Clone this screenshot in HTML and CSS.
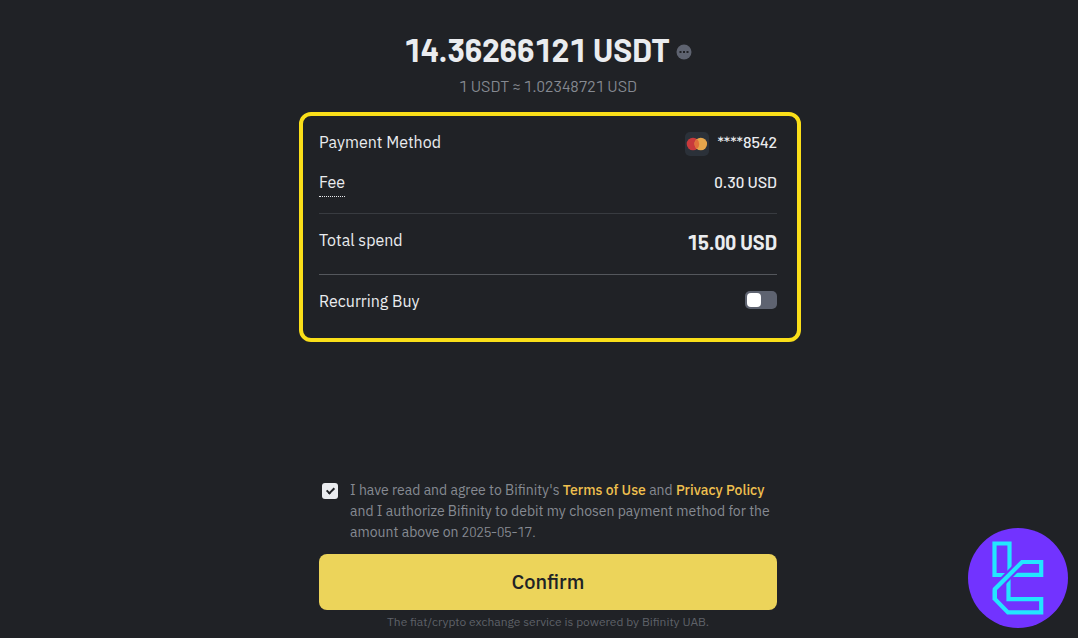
FILE: index.html
```html
<!DOCTYPE html>
<html lang="en">
<head>
  <meta charset="UTF-8">
  <meta name="viewport" content="width=device-width, initial-scale=1.0">
  <title>Confirm Order</title>
  <link rel="stylesheet" href="styles.css">
</head>
<body>
  <main class="order">
    <header class="amount">
      <h1>
        14.36266121 USDT
        <button class="more" type="button" aria-label="More">
          <svg viewBox="0 0 16 16" width="16" height="16">
            <circle cx="8" cy="8" r="7.5" fill="#5e6370"/>
            <path d="M3.5 7h2v2h-2zM7 7h2v2H7zM10.5 7h2v2h-2z" fill="#202226"/>
          </svg>
        </button>
      </h1>
      <p class="rate">1 USDT ≈ 1.02348721 USD</p>
    </header>

    <section class="details">
      <div class="row">
        <span>Payment Method</span>
        <span class="card-number">
          <svg viewBox="0 0 24 24" width="24" height="24" aria-hidden="true">
            <rect width="24" height="24" rx="5" fill="#2b3139"/>
            <circle cx="8" cy="12" r="6.3" fill="#c83a3c"/>
            <circle cx="15.8" cy="12" r="6.3" fill="#e5a54b"/>
            <path d="M11.9 7.1a6.3 6.3 0 0 1 0 9.8 6.3 6.3 0 0 1 0-9.8z" fill="#e0703a"/>
          </svg>
          <span class="number">****8542</span>
        </span>
      </div>
      <div class="row fee">
        <span class="hint">Fee</span>
        <span class="number">0.30 USD</span>
      </div>
      <div class="row total">
        <span>Total spend</span>
        <strong class="number">15.00 USD</strong>
      </div>
      <div class="row recurring">
        <label for="recurring">Recurring Buy</label>
        <input id="recurring" class="switch" type="checkbox" role="switch">
      </div>
    </section>

    <div class="agreement">
      <input id="agree" class="tick" type="checkbox" checked>
      <label for="agree">I have read and agree to Bifinity's <a href="#">Terms of Use</a> and <a href="#">Privacy Policy</a> and I authorize Bifinity to debit my chosen payment method for the amount above on <time>2025-05-17.</time></label>
    </div>
    <button class="confirm" type="button">Confirm</button>
    <p class="powered">The fiat/crypto exchange service is powered by Bifinity UAB.</p>
  </main>

  <svg class="logo" viewBox="0 0 100 100" width="100" height="100" aria-hidden="true">
    <circle cx="50" cy="50" r="50" fill="#7233ff"/>
    <g fill="none" stroke="#22e6ff" stroke-width="4.2">
      <path d="M26.5 15.5h15V47h-15z"/>
      <path d="M40 46.8h33.2V34H54"/>
      <path d="M40.5 48v23.2h32.7v13.2H40L26.8 71V61.5"/>
      <path d="M30 58L52 36" stroke="#7233ff" stroke-width="8.4"/>
      <path d="M26.8 72V61.2L54 34h4"/>
    </g>
  </svg>
</body>
</html>
```

FILE: styles.css
```css
* {
  box-sizing: border-box;
}

body {
  margin: 0;
  padding: 0 0 0 18px;
  background: #202226;
  color: #eaecef;
  font-family: "IBM Plex Sans", "Noto Sans", sans-serif;
  font-size: 16px;
  line-height: 24px;
}

.order {
  max-width: 458px;
  margin: 0 auto;
  padding-top: 28px;
}

.amount {
  text-align: center;
}

.amount h1,
.rate,
.number,
.agreement time {
  font-family: Barlow, Roboto, sans-serif;
  font-variant-numeric: tabular-nums;
}

.amount h1 {
  display: flex;
  align-items: center;
  justify-content: center;
  gap: 6px;
  margin: 0;
  font-size: 32px;
  font-weight: 700;
  line-height: 42px;
}

.more {
  display: flex;
  padding: 6px 0 0;
  border: 0;
  background: none;
  cursor: pointer;
}

.rate {
  margin: 4px 0 0;
  color: #868a92;
  font-size: 16px;
}

.details {
  margin: 14px -24px 0 -20px;
  padding: 14px 20px 25px 16px;
  border: 4px solid #fadf19;
  border-radius: 12px;
}

.row {
  display: flex;
  align-items: baseline;
  justify-content: space-between;
}

.number {
  font-weight: 500;
}

.card-number {
  display: flex;
  align-items: baseline;
  gap: 8px;
}

.card-number svg {
  align-self: flex-start;
  margin-top: 2px;
}

.fee {
  padding: 14px 0 16px;
  border-bottom: 1px solid #383b40;
}

.hint {
  padding-bottom: 2px;
  border-bottom: 1px dotted #eaecef;
}

.total {
  align-items: flex-start;
  padding: 14px 0 18px;
  border-bottom: 1px solid #54575c;
}

.total strong {
  font-size: 20px;
  font-weight: 700;
  line-height: 28px;
}

.recurring {
  align-items: flex-start;
  padding-top: 14px;
}

.switch {
  appearance: none;
  width: 32px;
  height: 18px;
  margin: 2px 0 0;
  padding: 2px;
  border-radius: 5px;
  background: #5e6370;
}

.switch::before {
  content: "";
  display: block;
  width: 14px;
  height: 14px;
  border-radius: 4px;
  background: #fff;
}

.switch:checked::before {
  margin-left: auto;
}

.agreement {
  display: flex;
  gap: 12px;
  margin-top: 138px;
  padding-left: 3px;
  color: #868a92;
  font-size: 14px;
  line-height: 21px;
}

.agreement a {
  color: #f0c04f;
  font-weight: 500;
  text-decoration: none;
}

.agreement time {
  line-height: 1;
}

.tick {
  appearance: none;
  flex: none;
  display: flex;
  justify-content: center;
  width: 16px;
  height: 16px;
  margin: 3px 0 0;
  border-radius: 3px;
  background: #eaecef;
}

.tick:checked::before {
  content: "";
  width: 3px;
  height: 6px;
  margin-top: 3px;
  border: solid #202226;
  border-width: 0 2px 2px 0;
  transform: rotate(45deg);
}

.confirm {
  display: block;
  width: 100%;
  height: 56px;
  margin-top: 11px;
  padding: 0 0 2px;
  border: 0;
  border-radius: 8px;
  background: #ecd45a;
  color: #202226;
  font-family: inherit;
  font-size: 20px;
  font-weight: 500;
  cursor: pointer;
}

.powered {
  margin: 2px 0 0;
  color: #5e6168;
  font-size: 12px;
  line-height: 20px;
  text-align: center;
}

.logo {
  position: fixed;
  right: 10px;
  bottom: 10px;
}
```
